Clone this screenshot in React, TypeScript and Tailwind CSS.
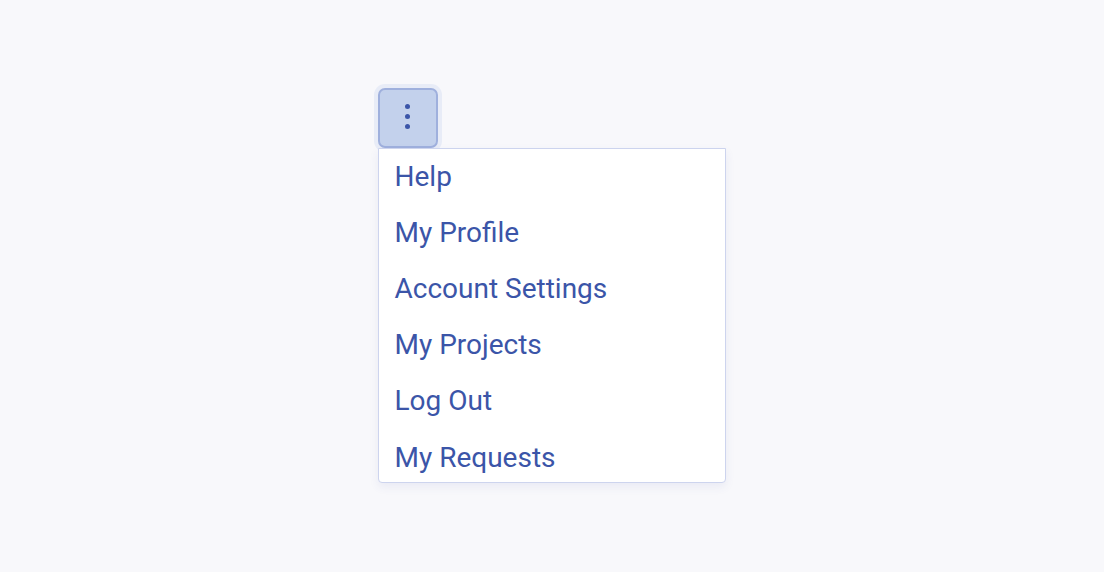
const items = ['Help', 'My Profile', 'Account Settings', 'My Projects', 'Log Out', 'My Requests'];

export default function App() {
  return (
    <div className="min-h-screen w-full bg-[#f8f8fb] font-['Roboto',sans-serif]">
      <div className="pl-[378px] pt-[88px]">
        <button
          type="button"
          className="flex h-[60px] w-[60px] flex-col items-center justify-center gap-[5px] rounded-[7px] border-2 border-[#9fb0dd] bg-[#c3d1ec] pb-[4px] pr-[2px] ring-4 ring-[#e8ecf7]"
        >
          <span className="h-[5px] w-[5px] rounded-full bg-[#3b55a8]" />
          <span className="h-[5px] w-[5px] rounded-full bg-[#3b55a8]" />
          <span className="h-[5px] w-[5px] rounded-full bg-[#3b55a8]" />
        </button>
        <ul className="w-[348px] rounded-b-[4px] border-[1.5px] border-[#cdd4ee] bg-white shadow-[0_4px_10px_rgba(60,80,160,0.08)]">
          {items.map(item => (
            <li key={item} className="flex h-[56px] items-center px-[15.5px] text-[28px] text-[#3b55a8] last:h-[53px] last:items-start last:pt-[8px]">
              {item}
            </li>
          ))}
        </ul>
      </div>
    </div>
  );
}
